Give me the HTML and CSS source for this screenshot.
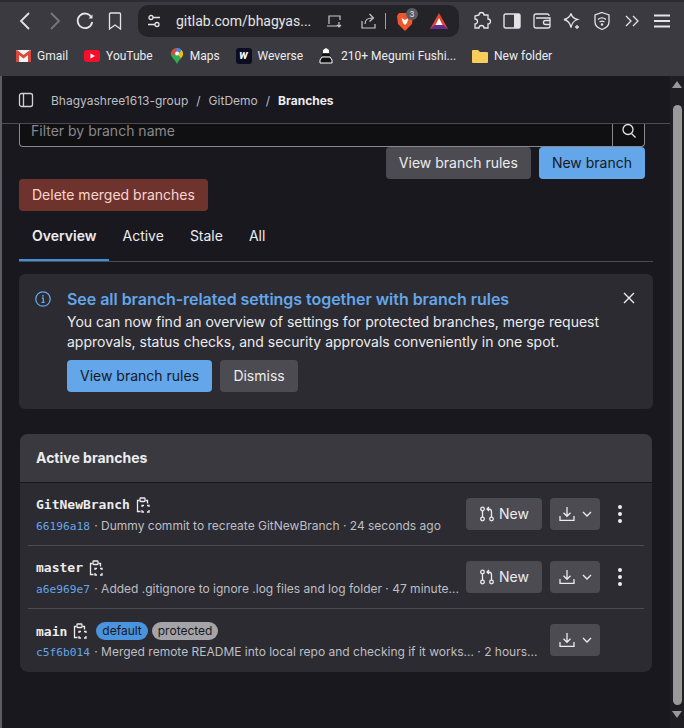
FILE: index.html
```html
<!DOCTYPE html>
<html>
<head>
    <title>Branches</title>
    <link rel="stylesheet" href="styles.css">
</head>
<body>
    <div class="toolbar">
        <div class="tool"><svg width="20" height="20" viewBox="0 0 20 20" class="line"><path d="M14 2 6 10l8 8"/></svg></div>
        <div class="tool dim"><svg width="20" height="20" viewBox="0 0 20 20" class="line"><path d="M6 2l8 8-8 8"/></svg></div>
        <div class="tool"><svg width="20" height="20" viewBox="0 0 20 20" class="line"><path d="M16.500 6.500A7.300 7.300 0 1 0 17.200 11"/><path d="M13.500 7.500h4v-4z" class="fill"/></svg></div>
        <div class="tool"><svg width="20" height="20" viewBox="0 0 20 20" class="line thin"><path d="M4.500 3a1 1 0 0 1 1-1h9a1 1 0 0 1 1 1v15L10 14l-5.500 4z"/></svg></div>
        <div class="address">
            <svg width="16" height="16" viewBox="0 0 16 16" class="line thin"><circle cx="5" cy="4.500" r="2"/><circle cx="11" cy="11.500" r="2"/><path d="M7 4.500h7M2 11.500h7"/></svg>
            <span class="url">gitlab.com/bhagyas...</span>
            <svg class="addr-laptop" width="18" height="18" viewBox="0 0 18 18"><path d="M3 12V4h11v4M1 14h10M13 10v5m-2-2 2 2 2-2" fill="none" stroke="#c8c8cc" stroke-width="1.200"/></svg>
            <svg class="addr-share" width="18" height="18" viewBox="0 0 18 18"><path d="M2 9v7h13v-4M5 12c0-4 3-6 7-6M9.500 2 13.500 6l-4 3.500" fill="none" stroke="#c8c8cc" stroke-width="1.200"/></svg>
            <span class="addr-sep"></span>
            <span class="brave">
                <svg width="16" height="19" viewBox="0 0 16 19"><path d="M2 1h12l2 3-1 8-7 7-7-7-1-8z" fill="#f0562a"/><path d="M4.500 6 8 8l3.500-2L10 11l-2 2-2-2z" fill="#fff"/></svg>
                <span class="brave-count">3</span>
            </span>
            <svg class="bat" width="18" height="16" viewBox="0 0 18 16"><path d="M9 0 18 16H0z" fill="#e0492f"/><path d="M0 16l4.500-4h9l4.500 4z" fill="#662d91"/><path d="M9 5l3.500 7h-7z" fill="#fff"/></svg>
        </div>
        <div class="tool first-ext"><svg width="20" height="20" viewBox="0 0 20 20" class="line thin"><path d="M7 4a2.500 2.500 0 0 1 5 0h4v4a2.500 2.500 0 0 1 0 5v4h-4a2.500 2.500 0 0 0-5 0H3v-4a2.500 2.500 0 0 0 0-5V5z"/></svg></div>
        <div class="tool"><svg width="18" height="16" viewBox="0 0 18 16"><rect x="1" y="1" width="16" height="14" rx="1.500" fill="none" stroke="#e4e4e6" stroke-width="1.400"/><rect x="11" y="1" width="6" height="14" fill="#e4e4e6"/></svg></div>
        <div class="tool"><svg width="18" height="16" viewBox="0 0 18 16" class="line thin"><path d="M16 3V2.500A1.500 1.500 0 0 0 14.500 1H3a2 2 0 0 0-2 2v10a2 2 0 0 0 2 2h12a2 2 0 0 0 2-2V5H3M17 7.500h-4.500a1.500 1.500 0 0 0 0 4H17"/></svg></div>
        <div class="tool"><svg width="20" height="20" viewBox="0 0 20 20" class="line thin"><path d="M9 2.500c.8 3.500 2.500 5 6.500 6-3.500 1-5.500 3-6.500 8-1-5-3-7-7-8 4-1 6-2.500 7-6z"/><path d="M15 14v4M13 16h4"/></svg></div>
        <div class="tool"><svg width="18" height="20" viewBox="0 0 18 20" class="line thin"><path d="M9 1.500 16 4v7c0 3.500-3 6-7 7.500C5 17 2 14.500 2 11V4z"/><path d="M5 8.500c2.500-2 5.500-2 8 0M6.500 11c1.500-1 3.500-1 5 0"/><circle cx="9" cy="13.500" r=".6"/></svg></div>
        <div class="tool"><svg width="14" height="12" viewBox="0 0 14 12" class="line thin"><path d="M1 1l5 5-5 5M8 1l5 5-5 5"/></svg></div>
        <div class="tool"><svg width="18" height="14" viewBox="0 0 18 14" class="line"><path d="M1 1.500h16M1 7h16M1 12.500h16"/></svg></div>
    </div>

    <div class="bookmarks">
        <div class="mark"><svg width="15" height="12" viewBox="0 0 15 12"><rect width="15" height="12" rx="1" fill="#f2f2f2"/><path d="M0 1v11h3V5l4.500 3.500L12 5v7h3V1l-1-1-6.500 5L1 0z" fill="#d9483b"/></svg>Gmail</div>
        <div class="mark"><svg width="16" height="12" viewBox="0 0 16 12"><rect width="16" height="12" rx="3" fill="#f50f2d"/><path d="M6.500 3.500 11 6l-4.500 2.500z" fill="#fff"/></svg>YouTube</div>
        <div class="mark maps"><svg width="12" height="16" viewBox="0 0 12 16"><path d="M6 0a6 6 0 0 1 6 6c0 3.500-4 5.500-6 10C4 11.500 0 9.500 0 6a6 6 0 0 1 6-6z" fill="#34a853"/><path d="M2 2a6 6 0 0 1 4-2v4L3 7 .2 5A6 6 0 0 1 2 2z" fill="#ea4335"/><path d="M6 0a6 6 0 0 1 4.500 2L8 5 5 3z" fill="#4285f4"/><path d="M12 6c0 1.500-1 3-2 4L7 7l3.500-5A6 6 0 0 1 12 6z" fill="#fbbc04"/><circle cx="6" cy="5.500" r="2" fill="#fff"/></svg>Maps</div>
        <div class="mark"><span class="weverse">w</span>Weverse</div>
        <div class="mark figure"><svg width="14" height="16" viewBox="0 0 14 16"><path d="M4 5V2l3-2 3 2v3z" fill="#fff"/><rect x="3" y="6" width="8" height="2" fill="#111"/><path d="M1 15v-3l2-3h8l2 3v3z" fill="#111" stroke="#fff"/></svg>210+ Megumi Fushi...</div>
        <div class="mark"><svg width="16" height="13" viewBox="0 0 16 13"><path d="M0 1a1 1 0 0 1 1-1h5l2 2h7a1 1 0 0 1 1 1v9a1 1 0 0 1-1 1H1a1 1 0 0 1-1-1z" fill="#f7ce5b"/></svg>New folder</div>
    </div>

    <div class="page">
        <main class="content">
            <nav class="crumbs">
                <svg class="crumb-icon" width="16" height="16" viewBox="0 0 16 16"><rect x="1.500" y="1.500" width="13" height="13" rx="2" fill="none" stroke="#d1d0d3" stroke-width="1.300"/><path d="M5.500 2v12" stroke="#d1d0d3" stroke-width="1.300"/></svg>
                <span>Bhagyashree1613-group</span><span class="slash">/</span><span>GitDemo</span><span class="slash">/</span><b>Branches</b>
            </nav>

            <div class="inner">
                <div class="controls">
                    <div class="filter">
                        <span class="filter-text">Filter by branch name</span>
                        <span class="filter-btn"><svg width="16" height="16" viewBox="0 0 16 16" class="line thin"><circle cx="7" cy="6.500" r="5"/><path d="M10.500 10.500l4 4"/></svg></span>
                    </div>
                    <div class="controls-btns">
                        <span class="btn">View branch rules</span>
                        <span class="btn blue">New branch</span>
                    </div>
                    <span class="btn red">Delete merged branches</span>
                </div>

                <div class="tabs">
                    <span class="tab active">Overview</span>
                    <span class="tab">Active</span>
                    <span class="tab">Stale</span>
                    <span class="tab">All</span>
                </div>

                <div class="alert">
                    <svg class="alert-icon" width="16" height="16" viewBox="0 0 16 16"><circle cx="8" cy="8" r="7.200" fill="none" stroke="#63a6e9" stroke-width="1.300"/><path d="M6.800 7.200h1.500v4M6.500 11.300h3.200" fill="none" stroke="#63a6e9" stroke-width="1.300"/><circle cx="8" cy="4.800" r=".9" fill="#63a6e9"/></svg>
                    <div class="alert-body">
                        <div class="alert-title">See all branch-related settings together with branch rules</div>
                        <div class="alert-text">You can now find an overview of settings for protected branches, merge request approvals, status checks, and security approvals conveniently in one spot.</div>
                        <div class="alert-btns">
                            <span class="btn blue">View branch rules</span>
                            <span class="btn dismiss">Dismiss</span>
                        </div>
                    </div>
                    <svg class="alert-close" width="16" height="16" viewBox="0 0 16 16"><path d="M3 3l10 10M13 3 3 13" stroke="#ececef" stroke-width="1.400"/></svg>
                </div>

                <section class="panel">
                    <header class="panel-head">Active branches</header>
                    <div class="row">
                        <div class="row-main">
                            <div class="branch"><span class="branch-name">GitNewBranch</span>
                                <svg class="copy" width="16" height="16" viewBox="0 0 16 16"><use href="#copy-icon"/></svg>
                            </div>
                            <div class="commit"><span class="sha">66196a18</span> · Dummy commit to recreate GitNewBranch · 24 seconds ago</div>
                        </div>
                        <div class="actions">
                            <span class="btn new"><svg width="16" height="16" viewBox="0 0 16 16"><use href="#mr-icon"/></svg>New</span>
                            <span class="btn dl"><svg width="16" height="16" viewBox="0 0 16 16"><use href="#dl-icon"/></svg><svg width="10" height="6" viewBox="0 0 10 6"><use href="#chev-icon"/></svg></span>
                            <span class="kebab"><i></i><i></i><i></i></span>
                        </div>
                    </div>
                    <div class="row">
                        <div class="row-main">
                            <div class="branch"><span class="branch-name">master</span>
                                <svg class="copy" width="16" height="16" viewBox="0 0 16 16"><use href="#copy-icon"/></svg>
                            </div>
                            <div class="commit"><span class="sha">a6e969e7</span> · Added .gitignore to ignore .log files and log folder · 47 minute...</div>
                        </div>
                        <div class="actions">
                            <span class="btn new"><svg width="16" height="16" viewBox="0 0 16 16"><use href="#mr-icon"/></svg>New</span>
                            <span class="btn dl"><svg width="16" height="16" viewBox="0 0 16 16"><use href="#dl-icon"/></svg><svg width="10" height="6" viewBox="0 0 10 6"><use href="#chev-icon"/></svg></span>
                            <span class="kebab"><i></i><i></i><i></i></span>
                        </div>
                    </div>
                    <div class="row">
                        <div class="row-main">
                            <div class="branch"><span class="branch-name">main</span>
                                <svg class="copy" width="16" height="16" viewBox="0 0 16 16"><use href="#copy-icon"/></svg>
                                <span class="badge badge-blue">default</span>
                                <span class="badge badge-gray">protected</span>
                            </div>
                            <div class="commit"><span class="sha">c5f6b014</span> · Merged remote README into local repo and checking if it works... · 2 hours...</div>
                        </div>
                        <div class="actions">
                            <span class="btn dl"><svg width="16" height="16" viewBox="0 0 16 16"><use href="#dl-icon"/></svg><svg width="10" height="6" viewBox="0 0 10 6"><use href="#chev-icon"/></svg></span>
                            <span class="kebab"></span>
                        </div>
                    </div>
                </section>
            </div>
        </main>
        <aside class="scrollbar">
            <span class="arrow-up"></span>
            <span class="thumb"></span>
            <span class="arrow-down"></span>
        </aside>
    </div>

    <svg class="defs" width="0" height="0">
        <defs>
            <g id="copy-icon" fill="none" stroke="#ececef" stroke-width="1.300">
                <path d="M4.500 3.500h-2v11h3M10.500 3.500h2v3"/>
                <rect x="5" y="1" width="5" height="3.500" rx=".8"/>
                <path d="M7 10V8.500h2M12 8.500h2V10M14 13v2h-2M9 15H7v-2"/>
            </g>
            <g id="mr-icon" fill="none" stroke="#ececef" stroke-width="1.300">
                <circle cx="3.500" cy="3" r="1.800"/><circle cx="3.500" cy="13" r="1.800"/><circle cx="12.500" cy="13" r="1.800"/>
                <path d="M3.500 5v6M12.500 11V6c0-2-1-3-3-3H8M10 1 8 3l2 2"/>
            </g>
            <g id="dl-icon" fill="none" stroke="#ececef" stroke-width="1.300">
                <path d="M8 1v9M4.500 6.800 8 10.300l3.500-3.500M1 10v4.300h14V10"/>
            </g>
            <path id="chev-icon" d="M1 1l4 4 4-4" fill="none" stroke="#ececef" stroke-width="1.300"/>
        </defs>
    </svg>
</body>
</html>
```

FILE: styles.css
```css
*{
    box-sizing: border-box;
}
html, body{
    margin: 0;
    height: 728px;
    overflow: hidden;
}
body{
    background: #3a3a40;
    color: #ececef;
    font-family: "Inter", "Liberation Sans", sans-serif;
    font-size: 14px;
}
.defs{
    position: absolute;
}
.line{
    fill: none;
    stroke: #e4e4e6;
    stroke-width: 1.800;
}
.line.thin{
    stroke-width: 1.300;
}
.line .fill{
    fill: #e4e4e6;
    stroke: none;
}

/* browser bar */
.toolbar{
    display: flex;
    align-items: center;
    height: 38px;
    padding: 3px 0 1px 10px;
    border-top: 2px solid #2c2c30;
}
.tool{
    width: 30px;
    display: flex;
    justify-content: center;
    align-items: center;
    flex: none;
}
.tool.dim svg{
    stroke: #77777c;
}
.tool.first-ext{
    margin-left: 8px;
}
.address{
    width: 321px;
    height: 32px;
    margin-left: 8px;
    padding-left: 8px;
    background: #242428;
    border-radius: 10px;
    display: flex;
    align-items: center;
    flex: none;
}
.url{
    margin-left: 14px;
    width: 147px;
    color: #e4e4e6;
    font-family: "Roboto", sans-serif;
    font-size: 14px;
    white-space: nowrap;
}
.addr-laptop{
    margin-left: 3px;
}
.addr-share{
    margin-left: 16px;
}
.addr-sep{
    width: 1px;
    height: 16px;
    background: #a0a0a4;
    margin-left: 7px;
}
.brave{
    position: relative;
    margin-left: 11px;
    height: 19px;
}
.brave-count{
    position: absolute;
    left: 9px;
    top: -4px;
    width: 12px;
    height: 12px;
    border-radius: 50%;
    background: #5b5b62;
    color: #e4e4e6;
    font-size: 8px;
    line-height: 12px;
    text-align: center;
}
.bat{
    margin-left: 17px;
}
.bookmarks{
    display: flex;
    align-items: center;
    gap: 16px;
    height: 38px;
    padding: 0 0 2px 16px;
    font-family: "Roboto", sans-serif;
    font-size: 12px;
    color: #ececef;
}
.mark{
    display: flex;
    align-items: center;
    gap: 6px;
    white-space: nowrap;
}
.mark.maps{
    gap: 7px;
    margin-left: 2px;
}
.mark.figure{
    gap: 8px;
}
.weverse{
    width: 16px;
    height: 16px;
    border-radius: 3px;
    background: #0d0d22;
    color: #fff;
    font-size: 12px;
    font-weight: 700;
    font-style: italic;
    line-height: 15px;
    text-align: center;
}

/* page */
.page{
    display: flex;
    height: 652px;
    border-left: 2px solid #5c5c61;
}
.content{
    flex: 1;
    background: #18181e;
    overflow: hidden;
}
.crumbs{
    display: flex;
    align-items: center;
    height: 48px;
    padding: 1px 0 0 16px;
    border-bottom: 1px solid #4c4b51;
    font-size: 12px;
    color: #bfbfc3;
}
.crumb-icon{
    margin-right: 17px;
}
.crumbs b{
    color: #ececef;
}
.slash{
    margin: 0 8px;
}
.inner{
    padding: 0 17px;
}
.controls{
    padding-right: 8px;
}
.filter{
    display: flex;
    height: 23px;
    background: #101013;
    border: 1px solid #89888d;
    border-top: 0;
    border-radius: 0 0 4px 4px;
}
.filter-text{
    flex: 1;
    padding-left: 11px;
    line-height: 13px;
    color: #89888d;
}
.filter-btn{
    width: 32px;
    border-left: 1px solid #89888d;
    text-align: center;
}
.filter-btn svg{
    margin-top: -1px;
}
.controls-btns{
    display: flex;
    justify-content: flex-end;
    gap: 8px;
}
.btn{
    display: inline-flex;
    align-items: center;
    justify-content: center;
    height: 32px;
    padding: 0 13px 1px;
    background: #4c4b51;
    border-radius: 4px;
    color: #ececef;
    white-space: nowrap;
}
.btn.blue{
    background: #63a6e9;
    color: #18181e;
}
.btn.red{
    background: #6f332e;
    color: #fcd5ce;
}
.btn.dismiss{
    width: 78px;
    padding: 0 0 1px;
}
.tabs{
    display: flex;
    margin-top: 1px;
    border-bottom: 1px solid #4c4b51;
}
.tab{
    padding: 14px 13px 15px;
    line-height: 20px;
}
.tab.active{
    font-weight: 600;
    box-shadow: inset 0 -2px 0 #428fdc;
}
.alert{
    display: flex;
    margin-top: 12px;
    padding: 15px 16px 17px;
    background: #2b2b31;
    border-radius: 6px;
}
.alert-icon{
    flex: none;
    margin: 2px 16px 0 0;
}
.alert-body{
    flex: 1;
}
.alert-title{
    color: #63a6e9;
    font-size: 16px;
    font-weight: 600;
    letter-spacing: -0.04px;
    line-height: 20px;
    margin-bottom: 3px;
}
.alert-text{
    line-height: 20px;
}
.alert-btns{
    display: flex;
    gap: 8px;
    margin-top: 8px;
}
.alert-close{
    flex: none;
    margin: 1px 0 0 0;
}
.panel{
    margin: 25px 0 0 1px;
    width: 632px;
    background: #2b2b31;
    border-radius: 8px;
    overflow: hidden;
}
.panel-head{
    height: 49px;
    padding-left: 16px;
    background: #3a393f;
    border-bottom: 1px solid #18181e;
    font-weight: 700;
    line-height: 47px;
}
.row{
    display: flex;
    align-items: center;
    height: 63px;
    margin: 0 8px;
    padding: 0 8px;
    border-bottom: 1px solid #4c4b51;
}
.row:last-child{
    border-bottom: 0;
}
.row-main{
    flex: 1;
    min-width: 0;
    padding-top: 2px;
}
.branch{
    display: flex;
    align-items: center;
    height: 20px;
}
.branch-name{
    font-family: "DejaVu Sans Mono", monospace;
    font-size: 13px;
    font-weight: 700;
}
.copy{
    margin-left: 5px;
}
.badge{
    height: 18px;
    padding: 0 6px;
    border-radius: 9px;
    font-size: 12px;
    line-height: 18px;
    margin-left: 4px;
    color: #18181e;
}
.badge-blue{
    margin-left: 8px;
    background: #4a93dd;
}
.badge-gray{
    background: #a4a3a8;
}
.commit{
    margin-top: 2px;
    font-size: 12px;
    line-height: 18px;
    color: #bfbfc3;
    white-space: nowrap;
}
.sha{
    margin-right: 1px;
    font-family: "DejaVu Sans Mono", monospace;
    font-size: 11.200px;
    color: #63a6e9;
}
.actions{
    display: flex;
    align-items: center;
    margin-top: -1px;
}
.btn.new{
    width: 76px;
    padding: 0;
    gap: 4px;
    margin-right: 8px;
}
.btn.dl{
    width: 50px;
    padding: 0;
    gap: 7px;
}
.kebab{
    width: 32px;
    margin-left: 4px;
    display: flex;
    flex-direction: column;
    align-items: center;
    gap: 3px;
}
.kebab i{
    width: 4px;
    height: 4px;
    border-radius: 50%;
    background: #ececef;
}
.scrollbar{
    width: 14px;
    background: #1f1f23;
    display: flex;
    flex-direction: column;
    align-items: center;
    padding-top: 5px;
}
.arrow-up{
    border: 5px solid transparent;
    border-top: 0;
    border-bottom: 7px solid #9a9a9a;
}
.thumb{
    width: 9px;
    height: 600px;
    margin-top: 17px;
    background: #9a9a9a;
    border-radius: 5px;
}
.arrow-down{
    margin-top: 6px;
    border: 5px solid transparent;
    border-bottom: 0;
    border-top: 7px solid #9a9a9a;
}
```
